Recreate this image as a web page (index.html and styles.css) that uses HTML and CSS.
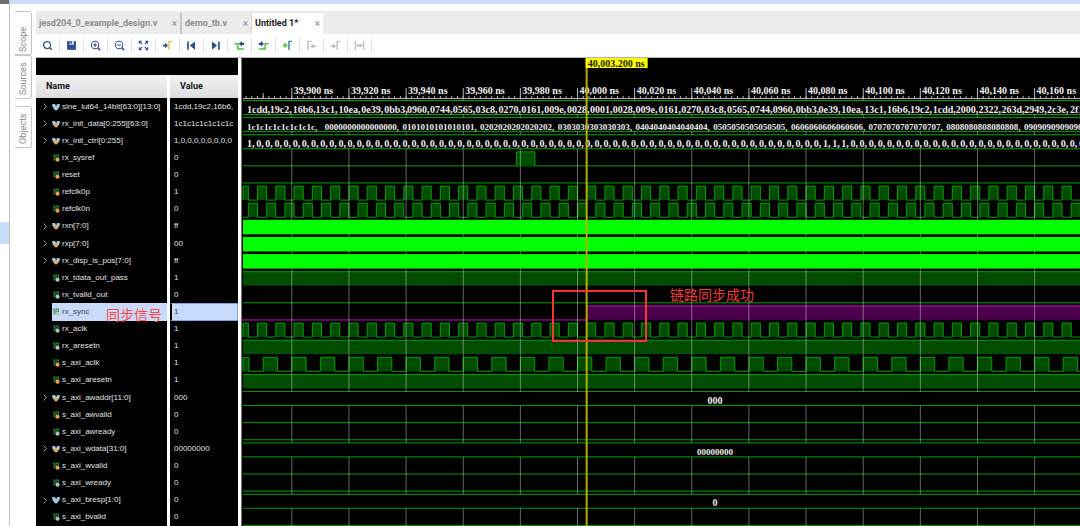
FILE: index.html
```html
<!DOCTYPE html>
<html lang="en">
<head>
<meta charset="utf-8">
<title>Untitled 1*</title>
<link rel="stylesheet" href="styles.css">
</head>
<body>
<div class="app">
  <div class="edge"><div class="edge-cap"></div><div class="edge-mark"></div></div>
  <div class="window">
    <div class="title-strip"></div>
    <div class="body">
      <nav class="side-tabs">
        <button class="side-tab">Scope</button>
        <button class="side-tab side-tab-sources">Sources</button>
        <button class="side-tab side-tab-apart">Objects</button>
      </nav>
      <main class="main">
        <div class="tabs">
          <div class="tab tab-design"><span>jesd204_0_example_design.v</span><button class="close" aria-label="Close jesd204_0_example_design.v">×</button></div>
          <div class="tab tab-tb"><span>demo_tb.v</span><button class="close" aria-label="Close demo_tb.v">×</button></div>
          <div class="tab tab-active"><span>Untitled 1*</span><button class="close" aria-label="Close Untitled 1">×</button></div>
        </div>
        <div class="toolbar">
          <button class="tool" aria-label="Search"><svg viewBox="0 0 12 12"><circle cx="5.5" cy="5.5" r="3.8" fill="none" stroke="#36518c" stroke-width="1.4"/><path d="M8.2 8.2l2.4 2.4" stroke="#36518c" stroke-width="1.8"/></svg></button>
          <button class="tool" aria-label="Save"><svg viewBox="0 0 12 12"><path d="M1.2 1.2h9.6v9.6H1.2z" fill="#2f4d8c"/><path d="M4 1.2h4.5v4H4z" fill="#e4eaf5"/><path d="M4.8 1.2h1.6v3H4.8z" fill="#2f4d8c"/></svg></button>
          <button class="tool" aria-label="Zoom in"><svg viewBox="0 0 12 12"><circle cx="5.5" cy="5.5" r="4.1" fill="none" stroke="#36518c" stroke-width="1.1"/><path d="M3.4 5.5h4.2M5.5 3.4v4.2" stroke="#36518c" stroke-width="1.2"/><path d="M8.4 8.4l2.6 2.6" stroke="#36518c" stroke-width="1.8"/></svg></button>
          <button class="tool" aria-label="Zoom out"><svg viewBox="0 0 12 12"><circle cx="5.5" cy="5.5" r="4.1" fill="none" stroke="#36518c" stroke-width="1.1"/><path d="M3.4 5.5h4.2" stroke="#36518c" stroke-width="1.2"/><path d="M8.4 8.4l2.6 2.6" stroke="#36518c" stroke-width="1.8"/></svg></button>
          <button class="tool" aria-label="Zoom fit"><svg viewBox="0 0 12 12"><path d="M1.500 4V1.500H4M8 1.500h2.500V4M10.500 8v2.500H8M4 10.500H1.500V8M1.800 1.800l2.800 2.800M10.200 1.800L7.400 4.600M1.800 10.200l2.800-2.800M10.200 10.200L7.400 7.400" fill="none" stroke="#36518c" stroke-width="1.2"/></svg></button>
          <button class="tool" aria-label="Go to cursor"><svg viewBox="0 0 12 12"><path d="M1 6h4" stroke="#36518c" stroke-width="2"/><path d="M3.4 3L7 6 3.4 9z" fill="#36518c"/><path d="M7.600 10.800V1.500H11M5.800 6h1.700" fill="none" stroke="#e3c341" stroke-width="1.500"/></svg></button>
          <button class="tool" aria-label="Go to start"><svg viewBox="0 0 12 12"><path d="M2.2 1.500v9" stroke="#2f4d8c" stroke-width="1.8"/><path d="M9.800 1.500v9L4.200 6z" fill="#2f4d8c"/></svg></button>
          <button class="tool" aria-label="Go to end"><svg viewBox="0 0 12 12"><path d="M9.800 1.500v9" stroke="#2f4d8c" stroke-width="1.8"/><path d="M2.200 1.500v9L7.800 6z" fill="#2f4d8c"/></svg></button>
          <button class="tool" aria-label="Previous transition"><svg viewBox="0 0 12 12"><path d="M.5 4.200h3.700v5.600h6.600" fill="none" stroke="#4cc23c" stroke-width="1.600"/><path d="M11.200 4.200H7.500" stroke="#36518c" stroke-width="2.600"/><path d="M8.600 1.200L5.200 4.200l3.400 3z" fill="#2f4d8c"/></svg></button>
          <button class="tool" aria-label="Next transition"><svg viewBox="0 0 12 12"><path d="M1.200 9.800h6.600V4.200h3.700" fill="none" stroke="#4cc23c" stroke-width="1.600"/><path d="M.8 4.200h3" stroke="#36518c" stroke-width="2.600"/><path d="M3.200 1.200l3.400 3-3.400 3z" fill="#2f4d8c"/></svg></button>
          <button class="tool" aria-label="Add marker"><svg viewBox="0 0 12 12"><path d="M.8 5.800H6M3.400 3.200v5.200" stroke="#4cc23c" stroke-width="1.700"/><path d="M7.600 11V1.500H11" fill="none" stroke="#3b80b5" stroke-width="1.600"/></svg></button>
          <button class="tool" aria-label="Previous marker" disabled><svg viewBox="0 0 12 12"><path d="M2.200 10.800V1.500H6M7 6.800h4" fill="none" stroke="#bdbdbd" stroke-width="1.500"/><path d="M8 4v5.600L4.600 6.800z" fill="#bdbdbd"/></svg></button>
          <button class="tool" aria-label="Next marker" disabled><svg viewBox="0 0 12 12"><path d="M7.800 10.800V1.500H11M.5 6.800h3" fill="none" stroke="#bdbdbd" stroke-width="1.500"/><path d="M3.200 4v5.600l3.400-2.800z" fill="#bdbdbd"/></svg></button>
          <button class="tool" aria-label="Swap cursors" disabled><svg viewBox="0 0 12 12"><path d="M1.500 1.200v9.600M10.500 1.200v9.600M3 6h6" stroke="#bdbdbd" stroke-width="1.400"/><path d="M5.200 3.800v4.400L2.400 6zM6.800 3.800v4.400L9.600 6z" fill="#bdbdbd"/></svg></button>
        </div>
        <div class="viewer">
          <div class="signals">
            <div class="band"></div>
            <table class="table">
              <thead><tr><th>Name</th><th>Value</th></tr></thead>
              <tbody id="rows"></tbody>
            </table>
          </div>
          <div class="wave"><svg id="wave" class="wave-svg" role="img" aria-label="Waveform"></svg></div>
        </div>
      </main>
    </div>
  </div>
</div>
<script src="wave.js"></script>
</body>
</html>
```
FILE: styles.css
```css
* { box-sizing: border-box; }
body {
  margin: 0;
  background: #fff;
  font-family: Roboto, "Liberation Sans", Arial, sans-serif;
  font-size: 9px;
  overflow: hidden;
}
button {
  border: 0;
  padding: 0;
  background: none;
  font: inherit;
  color: inherit;
}
.app { display: flex; min-height: 100vh; }
.edge {
  flex: none;
  width: 10px;
  border-right: 1px solid #c0c0c0;
}
.edge-cap { height: 4px; background: #6e6e6e; }
.edge-mark { height: 22px; margin-top: 218px; background: #c9dbfb; }
.window { flex: 1; min-width: 0; display: flex; flex-direction: column; }
.title-strip { height: 4px; background: #cbdcfc; }
.body { flex: 1; display: flex; min-height: 0; }
.side-tabs {
  flex: none;
  width: 26px;
  padding: 7px 4px 0 5px;
  display: flex;
  flex-direction: column;
}
.side-tab {
  height: 44px;
  border: 1px solid #c4c4c4;
  border-right: 0;
  border-radius: 3px 0 0 3px;
  writing-mode: vertical-rl;
  rotate: 180deg;
  color: #8a8a8a;
  line-height: 14px;
  text-align: center;
  padding-bottom: 12px;
}
.side-tab-sources { padding-bottom: 4px; }
.side-tab-apart { height: 42px; margin-top: 7px; padding-bottom: 4px; }
.main { flex: 1; min-width: 0; display: flex; flex-direction: column; }
.tabs {
  display: flex;
  height: 23px;
  margin-top: 7px;
  padding-top: 2px;
  background: #ebebeb;
}
.tab {
  display: flex;
  align-items: center;
  justify-content: space-between;
  padding: 0 3px 2px;
  font-weight: bold;
  color: #8d8d8d;
  line-height: 12px;
  white-space: nowrap;
}
.tab-design { width: 146px; border-right: 2px solid #c6c6c6; }
.tab-tb { width: 70px; border-right: 1px solid #d4d4d4; }
.tab-active { width: 71px; background: #fff; color: #1c1c1c; }
.close { font-weight: normal; font-size: 10px; color: #8a8a8a; line-height: 12px; padding-top: 2px; }
.toolbar { display: flex; height: 23px; padding-top: 4px; }
.tool {
  width: 24px;
  height: 15px;
  border-right: 1px solid #e2e2e2;
  display: flex;
  align-items: center;
  justify-content: center;
}
.tool svg { width: 11px; height: 11px; display: block; }
.viewer { flex: 1; display: flex; min-height: 0; border-top: 1px solid #b4b4b4; }
.signals { flex: none; width: 205px; display: flex; flex-direction: column; }
.band { height: 17px; background: #000; margin-right: 3px; }
.table { flex: 1; display: flex; flex-direction: column; }
tr { display: grid; grid-template-columns: 131px 68px; column-gap: 3px; min-height: 0; }
th {
  height: 23px;
  padding: 0 10px;
  background: linear-gradient(#f2f2f2, #dcdcdf);
  color: #1a1a1a;
  font-size: 9px;
  line-height: 23px;
  text-align: left;
}
tbody { flex: 1; display: grid; grid-template-rows: repeat(25, minmax(17px, 1fr)); }
td {
  display: flex;
  align-items: center;
  min-width: 0;
  padding: 0;
  background: #000;
  color: #e2e2e2;
  font-family: "Liberation Sans", Arial, sans-serif;
  font-size: 8px;
  line-height: 12px;
  white-space: nowrap;
  overflow: hidden;
}
.name { padding-left: 5px; }
.value { padding-left: 4px; }
.expander { flex: none; width: 11px; height: 9px; }
.kind { flex: none; width: 8px; height: 8px; margin-right: 2px; }
.expander svg, .kind svg { display: block; width: 100%; height: 100%; }
.selected .name, .selected .value { color: #3a4250; }
.selected .name { position: relative; background: linear-gradient(90deg, #000 16px, #c9dbfc 16px); overflow: visible; }
.selected .value { background: #c9dbfc; border: 1px solid #7ba7dc; border-left: 2px solid #000; padding-left: 2px; }
.note {
  position: absolute;
  left: 70px;
  top: 1px;
  font-family: "Noto Sans CJK SC", sans-serif;
  font-size: 14px;
  line-height: 20px;
  color: #ff4545;
}
.wave { flex: 1; min-width: 0; position: relative; background: #000; border-left: 1px solid #777; overflow: hidden; }
.wave-svg { position: absolute; inset: 0; width: 100%; height: 100%; display: block; }
.grid-line { stroke: #fff; stroke-opacity: .4; stroke-width: 1; }
.tick { stroke: #b8b8b8; stroke-width: 1; }
.text { font-family: "Liberation Serif", serif; font-weight: bold; font-size: 10px; fill: #ececec; }
.text-dense { font-size: 9px; }
.text-cursor { fill: #222200; }
.line { fill: none; stroke: #00a000; stroke-width: 1; }
.fill { fill: #004c00; }
.solid { fill: #00ff00; }
.line-sync { fill: none; stroke: #d800d8; stroke-width: 1; }
.fill-sync { fill: #4c004c; }
.cursor { fill: #b5ad00; }
.cursor-label { fill: #ffff00; }
.box { fill: none; stroke: #f53636; stroke-width: 2; }
.remark { font-family: "Noto Sans CJK SC", sans-serif; font-size: 14px; fill: #f23a3a; }
```
FILE: wave.js
```js
// [name, value, kind, direction, wave]
const signals = [
  ["sine_lut64_14bit[63:0][13:0]", "1cdd,19c2,16b6,", "bus", "out", "bus"],
  ["rx_init_data[0:255][63:0]", "1c1c1c1c1c1c1c", "bus", "in", "bus"],
  ["rx_init_ctrl[0:255]", "1,0,0,0,0,0,0,0,0", "bus", "in", "bus"],
  ["rx_sysref", "0", "bit", "in", "pulse"],
  ["reset", "0", "bit", "in", "low"],
  ["refclk0p", "1", "bit", "in", "clk"],
  ["refclk0n", "0", "bit", "in", "clkn"],
  ["rxn[7:0]", "ff", "bus", "in", "solid"],
  ["rxp[7:0]", "00", "bus", "in", "solid"],
  ["rx_disp_is_pos[7:0]", "ff", "bus", "in", "solid"],
  ["rx_tdata_out_pass", "1", "bit", "out", "high"],
  ["rx_tvalid_out", "0", "bit", "out", "low"],
  ["rx_sync", "1", "bit", "out", "sync"],
  ["rx_aclk", "1", "bit", "out", "clk"],
  ["rx_aresetn", "1", "bit", "out", "high"],
  ["s_axi_aclk", "1", "bit", "in", "axi"],
  ["s_axi_aresetn", "1", "bit", "in", "high"],
  ["s_axi_awaddr[11:0]", "000", "bus", "in", "bus"],
  ["s_axi_awvalid", "0", "bit", "in", "low"],
  ["s_axi_awready", "0", "bit", "out", "low"],
  ["s_axi_wdata[31:0]", "00000000", "bus", "in", "bus"],
  ["s_axi_wvalid", "0", "bit", "in", "low"],
  ["s_axi_wready", "0", "bit", "out", "low"],
  ["s_axi_bresp[1:0]", "0", "bus", "out", "bus"],
  ["s_axi_bvalid", "0", "bit", "out", "low"]
];

const dot = { in: "#f2a14a", out: "#b9bfc4" };
const kindIcon = (kind, dir) => kind === "bus"
  ? `<svg viewBox="0 0 8 8"><path d="M.3 1h2.6L4.100 3 5.400 1h2.300v2.600L6 6H2L.3 3.600z" fill="#a3cbe0"/><path d="M3 1l1.100 1.800L5.200 1z" fill="#23343d"/><circle cx="4" cy="5.400" r="2" fill="${dot[dir]}"/></svg>`
  : `<svg viewBox="0 0 8 8"><path d="M1 1h1.200v5.500M4 6.500V1h2.500v2.500M4 3.700h2.500" fill="none" stroke="#2f8a46" stroke-width="1.100"/><circle cx="5.600" cy="5.800" r="2" fill="${dot[dir]}"/></svg>`;
const arrow = `<svg viewBox="0 0 11 9"><path d="M2.500 1.500l3 3-3 3" fill="none" stroke="#9a9a9a"/></svg>`;

document.getElementById("rows").innerHTML = signals.map(([name, value, kind, dir, wave]) => `
  <tr class="${wave === "sync" ? "selected" : ""}">
    <td class="name"><span class="expander">${kind === "bus" ? arrow : ""}</span><span class="kind">${kindIcon(kind, dir)}</span><span>${name}</span>${wave === "sync" ? '<span class="note" lang="zh">同步信号</span>' : ""}</td>
    <td class="value">${value}</td>
  </tr>`).join("");

const svg = document.getElementById("wave");

function draw() {
  const W = svg.clientWidth;
  const H = svg.clientHeight;
  const pitch = (H - 40) / signals.length;
  const perNs = 2.857;
  const left = 1;
  const xAt = t => 335.5 + (t - 40000) * perNs;
  const top = i => 42.5 + i * pitch;
  const low = i => top(i) + 14;
  const out = [];
  const line = (x1, y1, x2, y2, c) => out.push(`<path class="${c}" d="M${x1} ${y1}L${x2} ${y2}"/>`);
  const rect = (x, y, w, h, c) => out.push(`<rect class="${c}" x="${x}" y="${y}" width="${w}" height="${h}"/>`);
  const text = (x, y, s, c = "text", anchor = "start") => out.push(`<text class="${c}" x="${x}" y="${y}" text-anchor="${anchor}">${s}</text>`);

  function clock(i, rise, period) {
    const half = period / 2;
    let d = "";
    let x = rise - Math.ceil((rise - left) / period) * period;
    for (; x < W; x += period) {
      const a = Math.max(x, left);
      const b = Math.max(x + half, left);
      if (b <= a) continue;
      rect(a, top(i), b - a, 14, "fill");
      d += `${d ? "L" : `M${left} ${low(i)}L`}${a} ${low(i)}L${a} ${top(i)}L${b} ${top(i)}L${b} ${low(i)}`;
    }
    out.push(`<path class="line" d="${d}L${W} ${low(i)}"/>`);
  }

  // wave bodies
  signals.forEach((s, i) => {
    const w = s[4];
    if (w === "bus") { line(left, top(i), W, top(i), "line"); line(left, low(i), W, low(i), "line"); }
    if (w === "low" || w === "pulse") line(left, low(i), W, low(i), "line");
    if (w === "pulse") {
      rect(xAt(39978.7), top(i), 18.3, 14, "fill");
      out.push(`<path class="line" d="M${xAt(39978.7)} ${low(i)}V${top(i)}h18.3V${low(i)}"/>`);
    }
    if (w === "high") { rect(left, top(i), W, 14, "fill"); line(left, top(i), W, top(i), "line"); }
    if (w === "clk") clock(i, xAt(40003.2), 6.4 * perNs);
    if (w === "clkn") clock(i, xAt(40006.4), 6.4 * perNs);
    if (w === "axi") clock(i, xAt(40000), 10 * perNs);
    if (w === "sync") {
      const x = xAt(40003.2);
      rect(x, top(i), W - x, 14, "fill-sync");
      out.push(`<path class="line-sync" d="M0 ${low(i)}H${x}V${top(i)}H${W}"/>`);
    }
  });

  // grid lines stop inside bus rows
  for (let t = 39900; xAt(t) < W; t += 20) {
    let y = 41;
    signals.forEach((s, i) => {
      if (s[4] !== "bus") return;
      line(xAt(t), y, xAt(t), top(i), "grid-line");
      y = low(i);
    });
    line(xAt(t), y, xAt(t), H, "grid-line");
  }
  signals.forEach((s, i) => { if (s[4] === "solid") rect(left, top(i) - 0.5, W, 14.5, "solid"); });

  // ruler
  line(left, 40.5, W, 40.5, "tick");
  for (let t = 39884; xAt(t) < W; t += 2) line(xAt(t), 38, xAt(t), 41, "tick");
  line(xAt(39890), 35, xAt(39890), 41, "tick");
  for (let t = 39900; xAt(t) < W; t += 20) {
    line(xAt(t), 30, xAt(t), 41, "tick");
    text(xAt(t) + 2, 36, `${String(t).slice(0, 2)},${String(t).slice(2)} ns`);
  }

  // bus values, one sample per slot
  const samples = (i, list, slot, c) => {
    out.push(`<text class="${c}" y="${top(i) + 12}">` +
      list.map((v, k) => `<tspan x="${5 + k * slot}">${v},</tspan>`).join("") + "</text>");
  };
  samples(0, "1cdd 19c2 16b6 13c1 10ea 0e39 0bb3 0960 0744 0565 03c8 0270 0161 009e 0028 0001 0028 009e 0161 0270 03c8 0565 0744 0960 0bb3 0e39 10ea 13c1 16b6 19c2 1cdd 2000 2322 263d 2949 2c3e 2f15".split(" "), 22.86, "text");
  samples(1, ["1c", "00", "01", "02", "03", "04", "05", "06", "07", "08", "09"].map(v => v.repeat(8)), 77.7, "text text-dense");
  samples(2, Array.from({ length: 92 }, (_, k) => (k === 0 || (k >= 63 && k <= 65) ? "1" : "0")), 9.143, "text");
  text(473, top(17) + 12, "000", "text", "middle");
  text(473, top(20) + 12, "00000000", "text text-dense", "middle");
  text(473, top(23) + 12, "0", "text", "middle");

  // cursor and remarks
  rect(xAt(40003.2) - 1, 0, 2, H, "cursor");
  rect(xAt(40003.2) - 1, 0, 62, 10, "cursor-label");
  text(xAt(40003.2) + 1, 9, "40,003.200 ns", "text text-cursor");
  rect(311, top(12) - 15, 93, 50, "box");
  text(428, top(12) - 6, "链路同步成功", "remark");
  svg.innerHTML = out.join("");
}
draw();
window.addEventListener("resize", draw);
```
